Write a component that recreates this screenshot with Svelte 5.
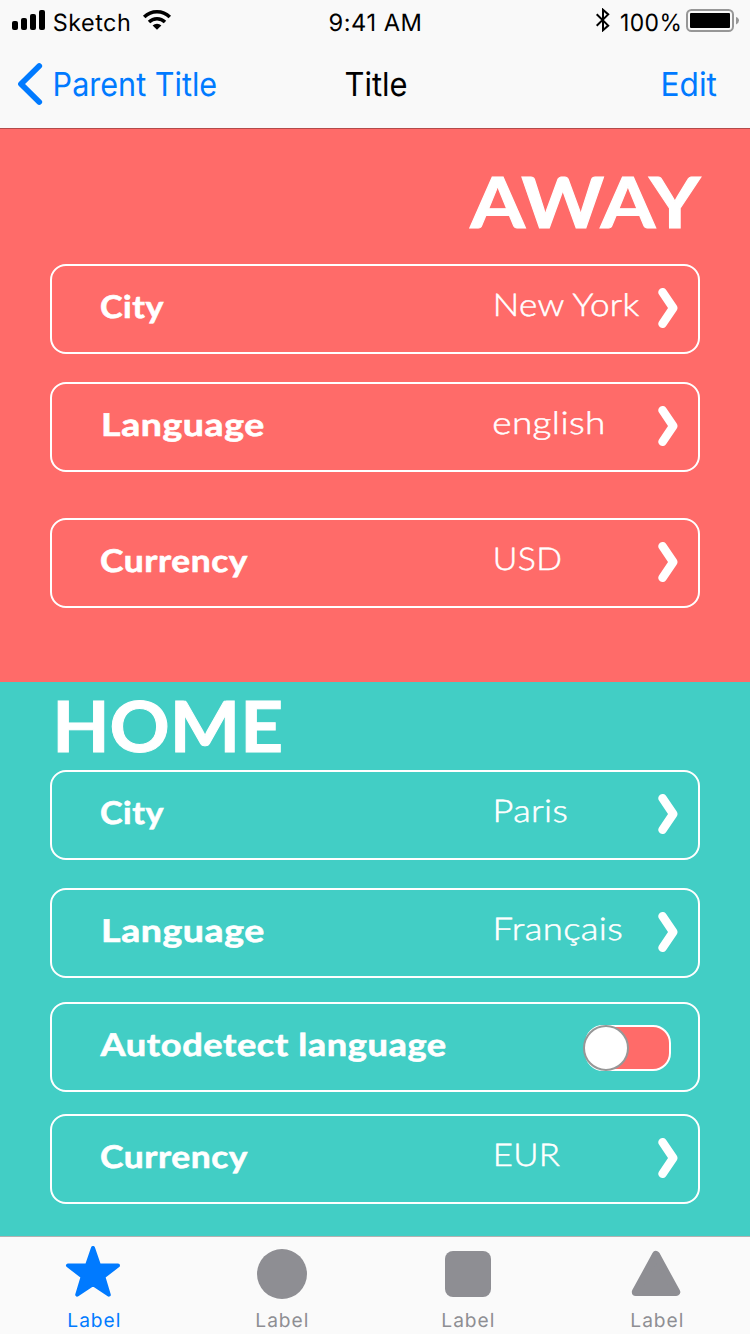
<script>
  const sections = [
    {
      id: 'away',
      title: 'AWAY',
      titleWidth: 231.5,
      rows: [
        { label: 'City', lx: 0, lw: 62.5, value: 'New York', vx: 2.5, vw: 145, gap: 28 },
        { label: 'Language', lx: 2.5, lw: 159.5, value: 'english', vx: 0.5, vw: 109, gap: 46 },
        { label: 'Currency', lx: 0, lw: 146.5, value: 'USD', vx: 2.5, vw: 64, gap: 0 }
      ]
    },
    {
      id: 'home',
      title: 'HOME',
      titleWidth: 223,
      rows: [
        { label: 'City', lx: 0, lw: 62.5, value: 'Paris', vx: 2.5, vw: 70.5, gap: 28 },
        { label: 'Language', lx: 2.5, lw: 159.5, value: 'Français', vx: 2.5, vw: 125.5, gap: 24 },
        { label: 'Autodetect language', lx: -1, lw: 345.5, toggle: true, gap: 22 },
        { label: 'Currency', lx: 0, lw: 146.5, value: 'EUR', vx: 2.5, vw: 63.5, gap: 0 }
      ]
    }
  ];

  const tabs = ['star', 'circle', 'square', 'triangle'];

  // Scales a line of text horizontally so its glyphs span exactly `width` pixels.
  // Measuring at ten times the size keeps the glyph bounds precise.
  function fit(node, width) {
    const cs = getComputedStyle(node);
    const ctx = document.createElement('canvas').getContext('2d');
    ctx.font = `${cs.fontWeight} ${parseFloat(cs.fontSize) * 10}px ${cs.fontFamily}`;
    if (cs.letterSpacing !== 'normal') ctx.letterSpacing = `${parseFloat(cs.letterSpacing) * 10}px`;
    const m = ctx.measureText(node.textContent);
    const spacing = parseFloat(cs.letterSpacing) || 0;
    const left = -m.actualBoundingBoxLeft / 10;
    const right = m.actualBoundingBoxRight / 10;
    const advance = m.width / 10 - spacing;
    const s = width / (Math.min(right, advance) - left);
    node.style.width = `${width}px`;
    node.style.transform = `translateX(${-left * s}px) scaleX(${s})`;
  }
</script>

<div class="screen">
  <header>
    <div class="status">
      <div class="carrier">
        <svg width="33" height="20" viewBox="0 0 33 20">
          <rect x="0" y="11" width="6" height="9" rx="2" />
          <rect x="9" y="8" width="6" height="12" rx="2" />
          <rect x="18" y="4" width="6" height="16" rx="2" />
          <rect x="27" y="0" width="6" height="20" rx="2" />
        </svg>
        <span class="fit sketch" use:fit={75}>Sketch</span>
        <svg class="wifi" width="30" height="20" viewBox="0 0 30 20">
          <path d="M2.2 7.1A18.2 18.2 0 0 1 27.8 7.1" fill="none" stroke="#000" stroke-width="3.5" />
          <path d="M7 12A11.3 11.3 0 0 1 23 12" fill="none" stroke="#000" stroke-width="3.4" />
          <path d="M10.6 15.5A6.2 6.2 0 0 1 19.4 15.5L15 19.8Z" />
        </svg>
      </div>
      <span class="fit" use:fit={90}>9:41 AM</span>
      <div class="power">
        <svg class="bt" width="16" height="24" viewBox="0 0 16 24">
          <path d="M1.7 6.3L13.2 17.6L8 22.2V1.8L13.2 6.4L1.7 17.7" fill="none" stroke="#000" stroke-width="2" />
        </svg>
        <span class="fit" use:fit={58.5}>100%</span>
        <svg class="battery" width="54" height="24" viewBox="0 0 54 24">
          <rect x="1" y="1" width="46" height="21" rx="4.5" fill="none" stroke="#979797" stroke-width="2" />
          <rect x="4" y="4" width="40" height="15" rx="1" />
          <path d="M50 8Q53 9 53 11.6Q53 14.2 50 15.5Z" fill="#979797" />
        </svg>
      </div>
    </div>
    <nav>
      <div class="back">
        <svg width="26" height="44" viewBox="0 0 26 44">
          <path d="M22.2 4L4 22L22.2 40" fill="none" stroke="#007aff" stroke-width="5.8" stroke-linecap="round" stroke-linejoin="round" />
        </svg>
        <span class="fit" use:fit={161}>Parent Title</span>
      </div>
      <span class="fit title" use:fit={60.5}>Title</span>
      <div class="edit"><span class="fit" use:fit={53.5}>Edit</span></div>
    </nav>
  </header>

  {#each sections as section}
    <section class={section.id}>
      <h1><span class="fit" use:fit={section.titleWidth}>{section.title}</span></h1>
      {#each section.rows as row}
        <div class="row" style:margin-bottom="{row.gap}px">
          <div class="label" style:padding-left="{row.lx + 1}px">
            <span class="fit" use:fit={row.lw}>{row.label}</span>
          </div>
          {#if row.toggle}
            <div class="toggle"><div class="knob"></div></div>
          {:else}
            <div class="value" style:padding-left="{row.vx + 1.5}px">
              <span class="fit" use:fit={row.vw}>{row.value}</span>
            </div>
            <svg class="chevron" width="22" height="42" viewBox="0 0 22 42">
              <path d="M5.5 5.2L16.2 21L5.5 36.8" fill="none" stroke="#fff" stroke-width="8.5" stroke-linecap="round" stroke-linejoin="round" />
            </svg>
          {/if}
        </div>
      {/each}
    </section>
  {/each}

  <footer>
    {#each tabs as tab}
      <div class="tab {tab}" class:active={tab === 'star'}>
        <svg width="56" height="56" viewBox="0 0 56 56" fill="currentColor" stroke="currentColor" stroke-linejoin="round">
          {#if tab === 'star'}
            <path d="M28 5L34 22.4L53 22.4L38.4 33.7L43.8 51.7L28 41L12.2 51.7L17.6 33.7L3 22.4L22 22.4Z" stroke-width="4" />
          {:else if tab === 'circle'}
            <circle cx="28" cy="31" r="25" stroke="none" />
          {:else if tab === 'square'}
            <rect x="5" y="8" width="46" height="46" rx="8" stroke="none" />
          {:else}
            <path d="M28 12L48.2 49L7.8 49Z" stroke-width="8" />
          {/if}
        </svg>
        <span class="fit" use:fit={50}>Label</span>
      </div>
    {/each}
  </footer>
</div>

<style>
  :global(body) {
    margin: 0;
  }
  .screen {
    width: 750px;
    height: 1334px;
    display: flex;
    flex-direction: column;
    overflow: hidden;
    font-family: 'Inter', sans-serif;
    text-rendering: geometricPrecision;
    color: #000;
  }
  svg {
    display: block;
    flex: none;
  }
  .fit {
    display: block;
    flex: none;
    white-space: nowrap;
    transform-origin: 0 0;
  }
  header {
    height: 128px;
    background: #f9f9f9;
    border-bottom: 1px solid #b34b4a;
  }
  .status {
    height: 40px;
    padding: 0 11px 0 12px;
    box-sizing: border-box;
    display: grid;
    grid-template-columns: 317.5px 1fr 143px;
    font-size: 23.6px;
    line-height: 28px;
    letter-spacing: 0.5px;
  }
  .status .fit {
    margin-top: 9px;
  }
  .carrier,
  .power {
    display: flex;
    align-items: flex-start;
  }
  .carrier svg {
    margin-top: 10px;
  }
  .sketch {
    margin-left: 8.5px;
  }
  .carrier .wifi {
    margin-left: 13.5px;
  }
  .power {
    justify-content: flex-end;
  }
  .bt {
    margin: 8px 9.5px 0 0;
  }
  .battery {
    margin: 9px -1px 0 7px;
  }
  nav {
    height: 88px;
    padding: 0 34px 0 17px;
    display: grid;
    grid-template-columns: 328.5px 60.5px 1fr;
    font-size: 33px;
    line-height: 40px;
  }
  nav .fit {
    margin-top: 24px;
  }
  .back {
    display: flex;
    align-items: flex-start;
    color: #007aff;
  }
  .back svg {
    margin: 22px 12px 0 0;
  }
  .edit {
    display: flex;
    justify-content: flex-end;
    color: #007aff;
  }
  section {
    padding: 0 50px;
    color: #fff;
    font-family: 'Lato', sans-serif;
  }
  .away {
    height: 523px;
    padding-top: 30px;
    background: #ff6b69;
  }
  .home {
    height: 554px;
    background: #42cec5;
  }
  h1 {
    margin: 0;
    height: 105px;
    display: flex;
    font-size: 70.4px;
    font-weight: 700;
    line-height: 84px;
    -webkit-text-stroke: 1px #fff;
  }
  .away h1 {
    justify-content: flex-end;
    margin-right: -0.5px;
  }
  .home h1 {
    box-sizing: border-box;
    height: 88px;
    padding: 1px 0 0 8px;
  }
  .row {
    box-sizing: border-box;
    height: 90px;
    border: 2px solid #fff;
    border-radius: 16px;
    padding-left: 48px;
    display: flex;
    align-items: flex-start;
    font-size: 31.3px;
  }
  .label {
    box-sizing: border-box;
    width: 392px;
    padding-top: 20px;
    line-height: 40px;
    font-weight: 700;
    letter-spacing: 0.5px;
    -webkit-text-stroke: 0.6px #fff;
  }
  .value {
    box-sizing: border-box;
    width: 165px;
    padding-top: 20px;
    line-height: 36px;
    font-weight: 300;
    letter-spacing: 0.3px;
    -webkit-text-stroke: 0.5px #fff;
  }
  .chevron {
    margin-top: 21px;
  }
  .toggle {
    box-sizing: border-box;
    width: 86px;
    height: 46px;
    margin: 21px 0 0 93px;
    border: 2px solid #fff;
    border-radius: 18px;
    background: #ff6b69;
  }
  .knob {
    box-sizing: border-box;
    width: 46px;
    height: 46px;
    margin: -2px 0 0 -4px;
    border: 2px solid #979797;
    border-radius: 50%;
    background: #fff;
  }
  footer {
    height: 97px;
    border-top: 1px solid #b2b2b2;
    background: #fafafa;
    display: grid;
    grid-template-columns: 186px 191px 181px 192px;
  }
  .tab {
    display: flex;
    flex-direction: column;
    align-items: center;
    margin-top: 6px;
    color: #8e8e93;
    font-size: 19.4px;
    line-height: 24px;
    letter-spacing: 1px;
  }
  .tab .fit {
    margin: 9px 0 0 1px;
  }
  .triangle {
    padding-left: 4px;
  }
  .active {
    color: #007aff;
  }
</style>
